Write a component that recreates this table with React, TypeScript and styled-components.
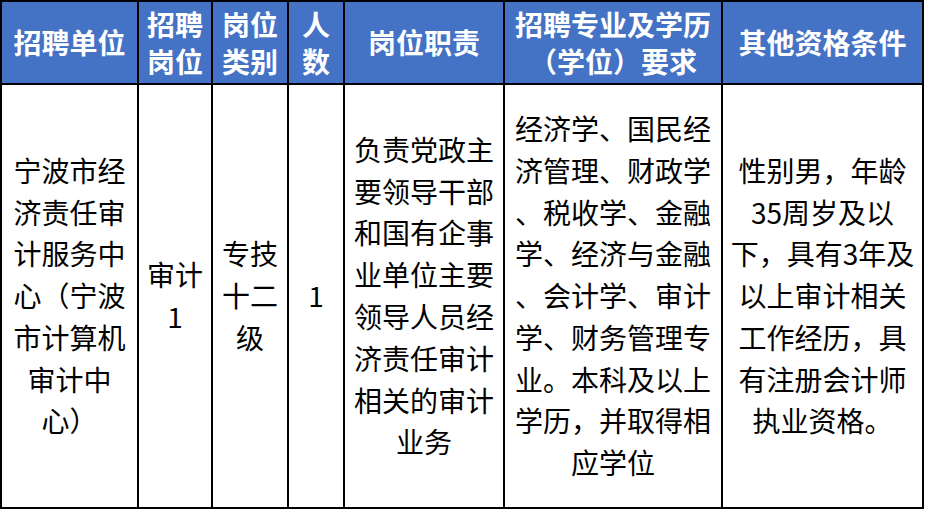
import React from "react";
import styled, { createGlobalStyle } from "styled-components";

const Global = createGlobalStyle`
  html, body { margin: 0; padding: 0; background: #ffffff; }
  body { font-family: "Noto Sans CJK SC", "Noto Sans", sans-serif; }
`;

const Table = styled.div`
  display: grid;
  grid-template-columns: 135px 72px 74px 54px 158px 216px 199px;
  grid-template-rows: 81px 422px;
  gap: 2px;
  padding: 2px;
  background: #000000;
  width: max-content;
`;

const HeadCell = styled.div`
  background: #4472c4;
  color: #ffffff;
  font-weight: 700;
  font-size: 28px;
  line-height: 37px;
  display: flex;
  flex-direction: column;
  align-items: center;
  justify-content: center;
  text-align: center;
`;

const BodyCell = styled.div`
  background: #ffffff;
  color: #000000;
  font-size: 28px;
  line-height: 41.8px;
  display: flex;
  flex-direction: column;
  align-items: center;
  justify-content: center;
  text-align: center;
`;

const Line = styled.span`
  display: block;
  white-space: nowrap;
`;

const headers: string[][] = [
  ["招聘单位"],
  ["招聘", "岗位"],
  ["岗位", "类别"],
  ["人", "数"],
  ["岗位职责"],
  ["招聘专业及学历", "（学位）要求"],
  ["其他资格条件"],
];

const body: string[][] = [
  ["宁波市经", "济责任审", "计服务中", "心（宁波", "市计算机", "审计中", "心）"],
  ["审计", "1"],
  ["专技", "十二", "级"],
  ["1"],
  ["负责党政主", "要领导干部", "和国有企事", "业单位主要", "领导人员经", "济责任审计", "相关的审计", "业务"],
  ["经济学、国民经", "济管理、财政学", "、税收学、金融", "学、经济与金融", "、会计学、审计", "学、财务管理专", "业。本科及以上", "学历，并取得相", "应学位"],
  ["性别男，年龄", "35周岁及以", "下，具有3年及", "以上审计相关", "工作经历，具", "有注册会计师", "执业资格。"],
];

export default function App() {
  return (
    <>
      <Global />
      <Table>
        {headers.map((lines, i) => (
          <HeadCell key={"h" + i}>
            {lines.map((l, j) => (
              <Line key={j}>{l}</Line>
            ))}
          </HeadCell>
        ))}
        {body.map((lines, i) => (
          <BodyCell key={"b" + i}>
            {lines.map((l, j) => (
              <Line key={j}>{l}</Line>
            ))}
          </BodyCell>
        ))}
      </Table>
    </>
  );
}
